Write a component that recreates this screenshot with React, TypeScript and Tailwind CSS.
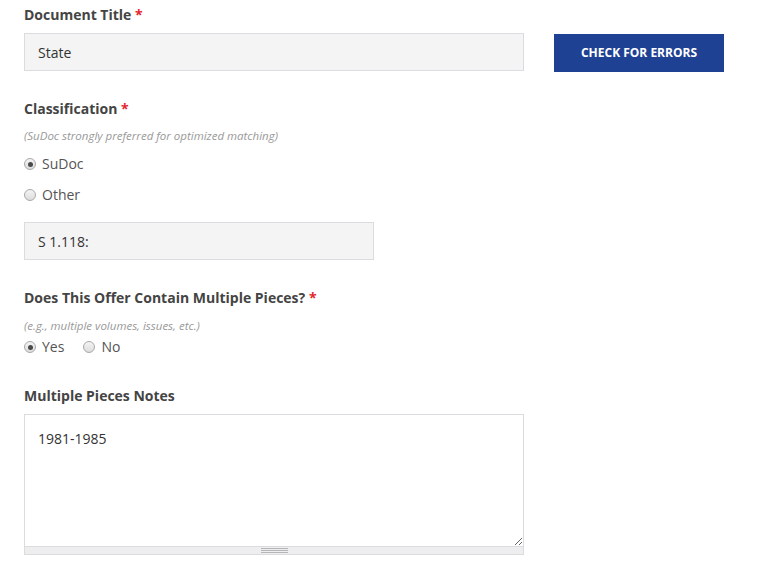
import { useState } from 'react';

const Required = () => <span className="text-[#e4262c]"> *</span>;

interface RadioProps {
  label: string;
  checked: boolean;
  onSelect: () => void;
}

const Radio = ({ label, checked, onSelect }: RadioProps) => (
  <label className="flex items-center gap-[6px] cursor-pointer" onClick={onSelect}>
    <span className="flex h-[12px] w-[12px] items-center justify-center rounded-full border border-[#a9a9a9] bg-gradient-to-b from-[#f4f4f4] to-[#dcdcdc]">
      {checked && <span className="h-[5px] w-[5px] rounded-full bg-[#4a4a4a]" />}
    </span>
    <span className="text-[14px] leading-[20px] text-[#555]">{label}</span>
  </label>
);

export default function App() {
  const [classification, setClassification] = useState<'sudoc' | 'other'>('sudoc');
  const [multiple, setMultiple] = useState<'yes' | 'no'>('yes');

  return (
    <div
      className="min-h-[578px] w-[758px] bg-white pl-[24px] pt-[5px] text-[#444]"
      style={{ fontFamily: '"Open Sans", "Liberation Sans", sans-serif' }}
    >
      <div className="text-[14px] font-bold leading-[20px] text-[#444]">
        Document Title<Required />
      </div>
      <div className="mt-[8px] flex">
        <input
          defaultValue="State"
          className="h-[38px] w-[500px] border border-[#dcdce0] bg-[#f4f4f4] px-[13px] text-[14px] text-[#333] outline-none"
        />
        <button className="ml-[30px] mt-px h-[38px] w-[170px] bg-[#1f4194] text-[12px] font-bold uppercase text-white">
          Check for errors
        </button>
      </div>

      <div className="mt-[27px] text-[14px] font-bold leading-[20px]">
        Classification<Required />
      </div>
      <div className="mt-[9px] text-[11.5px] italic leading-[16px] text-[#999]">
        (SuDoc strongly preferred for optimized matching)
      </div>
      <div className="mt-[10px] flex flex-col gap-[11px]">
        <Radio label="SuDoc" checked={classification === 'sudoc'} onSelect={() => setClassification('sudoc')} />
        <Radio label="Other" checked={classification === 'other'} onSelect={() => setClassification('other')} />
      </div>
      <input
        defaultValue="S 1.118:"
        className="mt-[17px] h-[38px] w-[350px] border border-[#dcdce0] bg-[#f4f4f4] px-[13px] text-[14px] text-[#333] outline-none"
      />

      <div className="mt-[28px] text-[14px] font-bold leading-[20px]">
        Does This Offer Contain Multiple Pieces?<Required />
      </div>
      <div className="mt-[10px] text-[11.5px] italic leading-[16px] text-[#999]">
        (e.g., multiple volumes, issues, etc.)
      </div>
      <div className="mt-[3px] flex gap-[19px]">
        <Radio label="Yes" checked={multiple === 'yes'} onSelect={() => setMultiple('yes')} />
        <Radio label="No" checked={multiple === 'no'} onSelect={() => setMultiple('no')} />
      </div>

      <div className="mt-[29px] text-[14px] font-bold leading-[20px]">Multiple Pieces Notes</div>
      <div className="mt-[8px] w-[500px] border border-[#dcdce0]">
        <textarea
          defaultValue="1981-1985"
          className="block h-[131px] w-full bg-white px-[13px] py-[14px] text-[14px] leading-[20px] text-[#333] outline-none"
        />
        <div className="flex h-[8px] flex-col items-center justify-center gap-px border-t border-[#dcdce0] bg-[#eeeeee]">
          <span className="h-px w-[27px] bg-[#b5b5b5]" />
          <span className="h-px w-[27px] bg-[#b5b5b5]" />
          <span className="h-px w-[27px] bg-[#b5b5b5]" />
        </div>
      </div>
    </div>
  );
}
